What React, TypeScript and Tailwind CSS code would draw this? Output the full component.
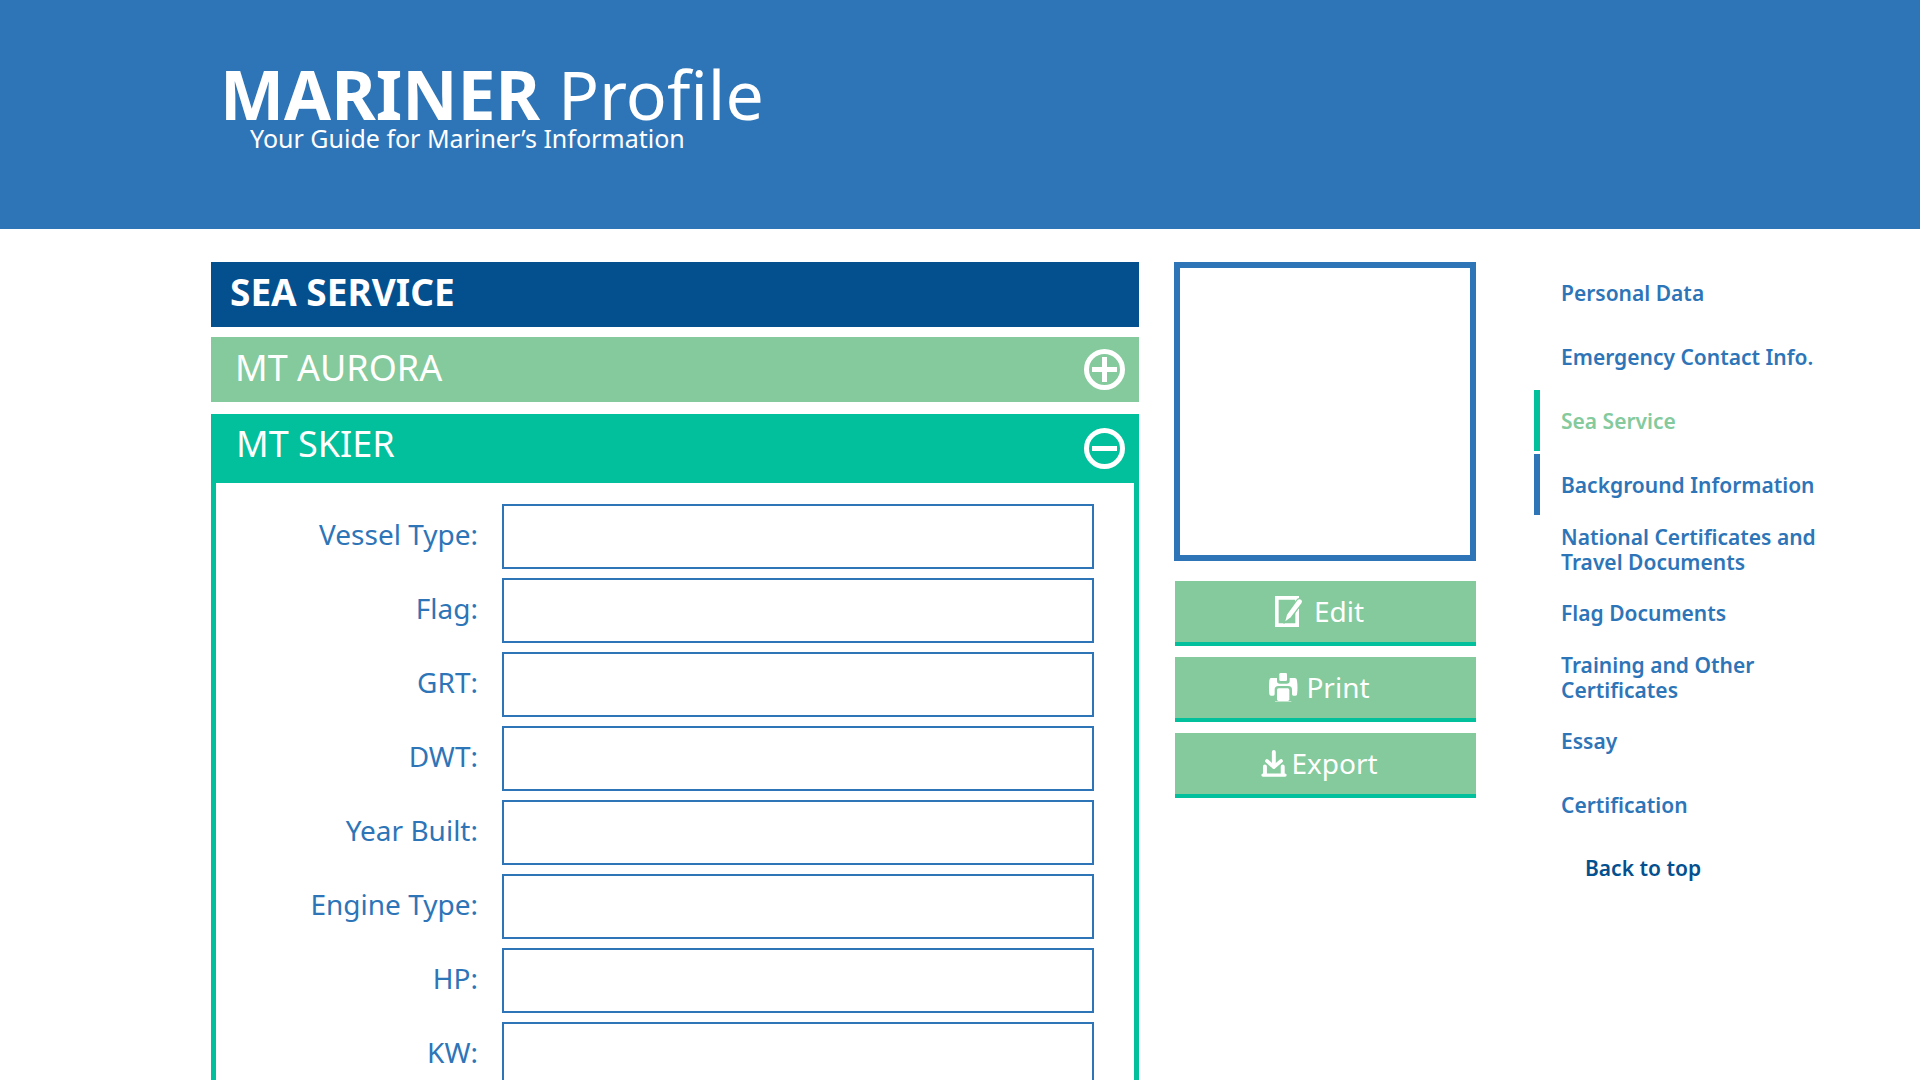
import React, { useState } from "react";

const sections = [
  { lines: ["Personal Data"], style: "border-transparent text-[#2e75b8]" },
  { lines: ["Emergency Contact Info."], style: "border-transparent text-[#2e75b8]" },
  { lines: ["Sea Service"], style: "border-[#02c09c] text-[#84ca9c]" },
  { lines: ["Background Information"], style: "border-[#2e75b8] text-[#2e75b8]" },
  { lines: ["National Certificates and", "Travel Documents"], style: "border-transparent text-[#2e75b8]" },
  { lines: ["Flag Documents"], style: "border-transparent text-[#2e75b8]" },
  { lines: ["Training and Other", "Certificates"], style: "border-transparent text-[#2e75b8]" },
  { lines: ["Essay"], style: "border-transparent text-[#2e75b8]" },
  { lines: ["Certification"], style: "border-transparent text-[#2e75b8]" },
];

const fields = ["Vessel Type", "Flag", "GRT", "DWT", "Year Built", "Engine Type", "HP", "KW"];

function CircleIcon({ plus = false }: { plus?: boolean }) {
  return (
    <svg viewBox="0 0 41 41" className="size-[41px] shrink-0" fill="none" stroke="currentColor" strokeWidth="5" aria-hidden="true">
      <circle cx="20.5" cy="20.5" r="18" />
      <path d={plus ? "M8 20.5h25M20.5 8v25" : "M8 20.5h25"} />
    </svg>
  );
}

function EditIcon() {
  return (
    <svg viewBox="0 0 81 93" className="h-[31px] w-[27px]" aria-hidden="true">
      <path d="M5.5 5.5h61v82h-61z" fill="none" stroke="currentColor" strokeWidth="11" />
      <path
        d="M31 76l5-20L68 12q6-5 11 0 4 4 0 10L47 64z"
        fill="currentColor"
        stroke="#84ca9c"
        strokeWidth="7"
        paintOrder="stroke"
      />
    </svg>
  );
}

function PrintIcon() {
  return (
    <svg viewBox="0 0 87 87" className="size-[29px]" fill="currentColor" aria-hidden="true">
      <rect x="31" y="0" width="23" height="24" rx="4" />
      <path d="M6 15H24V24q0 8 9 8H53q9 0 9-8V15H78q6 0 6 8q3 20 0 42q-1 3-5 3H73q-4 0-4-5V50q0-11-11-11H28q-11 0-11 11V63q0 5-4 5H6q-4 0-5-4Q-1 44 1 22q1-7 5-7z" />
      <rect x="24" y="46" width="37" height="38" rx="5" />
      <rect x="18" y="84" width="49" height="3" opacity="0.5" />
    </svg>
  );
}

function ExportIcon() {
  return (
    <svg viewBox="0 0 77 82" className="h-[27px] w-[26px]" fill="none" stroke="currentColor" strokeLinecap="round" aria-hidden="true">
      <path d="M38 6v42M11 50v22M65 50v22" strokeWidth="12" />
      <path d="M17 33l21 19 22-19" strokeWidth="11" strokeLinejoin="round" />
      <path d="M5 76h67" strokeWidth="10" />
    </svg>
  );
}

const actions = [
  { label: "Edit", icon: <EditIcon />, gap: "gap-3" },
  { label: "Print", icon: <PrintIcon />, gap: "gap-2" },
  { label: "Export", icon: <ExportIcon />, gap: "gap-1" },
];

export default function App() {
  const [values, setValues] = useState<Record<string, string>>({});

  return (
    <div id="top" className="min-h-screen bg-white font-['Noto_Sans',sans-serif] text-[#2e75b8]">
      <header className="min-h-[229px] bg-[#2e75b8] pt-[60px] pl-[220px] text-white">
        <h1 className="text-[68px] leading-[68px]">
          <strong className="font-bold">MARINER</strong> Profile
        </h1>
        <p className="pl-[30px] text-[25px] leading-5">Your Guide for Mariner’s Information</p>
      </header>

      <div className="flex items-start pt-[33px] pl-[211px]">
        <main className="min-w-0 flex-1">
          <h2 className="flex h-[65px] items-center bg-[#04508f] pb-1.5 pl-[19px] text-[37px] font-bold text-white">
            SEA SERVICE
          </h2>

          <button
            type="button"
            aria-expanded="false"
            className="mt-2.5 flex h-[65px] w-full items-center justify-between bg-[#84ca9c] pr-3.5 pl-6 text-4xl text-white"
          >
            <span className="pb-1 leading-10">MT AURORA</span>
            <CircleIcon plus />
          </button>

          <section className="mt-3 border-x-[5px] border-b-[5px] border-[#02c09c]">
            <button
              type="button"
              aria-expanded="true"
              className="flex h-[69px] w-full items-center justify-between bg-[#02c09c] pr-[9px] pl-5 text-4xl text-white"
            >
              <span className="pb-2.5 leading-10">MT SKIER</span>
              <CircleIcon />
            </button>

            <form className="flex flex-col gap-[9px] pt-[21px] pr-10 pb-8">
              {fields.map((name) => (
                <div key={name} className="flex items-center gap-6">
                  <label htmlFor={name} className="flex-1 pb-1.5 text-right text-[28px] leading-9">
                    {name}:
                  </label>
                  <input
                    id={name}
                    type="text"
                    value={values[name] ?? ""}
                    onChange={(e) => setValues({ ...values, [name]: e.target.value })}
                    className="h-[65px] w-[592px] border-2 border-[#2e75b8] px-4 text-2xl outline-none"
                  />
                </div>
              ))}
            </form>
          </section>
        </main>

        <aside className="ml-[35px] w-[302px]">
          <div role="img" aria-label="Mariner photo" className="h-[299px] border-[6px] border-[#2e75b8]" />
          <div className="mt-5 flex flex-col gap-[11px] pl-px">
            {actions.map(({ label, icon, gap }) => (
              <button
                key={label}
                type="button"
                className={`flex h-[65px] items-center justify-center border-b-4 border-[#02c09c] bg-[#84ca9c] pr-3 text-[28px] text-white ${gap}`}
              >
                {icon}
                <span className="pb-0.5 leading-9">{label}</span>
              </button>
            ))}
          </div>
        </aside>

        <nav aria-label="Profile sections" className="ml-[58px] flex w-[386px] flex-col gap-[3px] text-[21px] leading-[25px] font-semibold">
          {sections.map(({ lines, style }) => (
            <a key={lines[0]} href="#top" className={`flex h-[61px] flex-col justify-center border-l-[6px] pt-0.5 pl-[21px] ${style}`}>
              {lines.map((line) => (
                <span key={line}>{line}</span>
              ))}
            </a>
          ))}
          <a href="#top" className="flex h-[61px] items-center pl-[51px] text-[#04508f]">
            Back to top
          </a>
        </nav>
      </div>
    </div>
  );
}
